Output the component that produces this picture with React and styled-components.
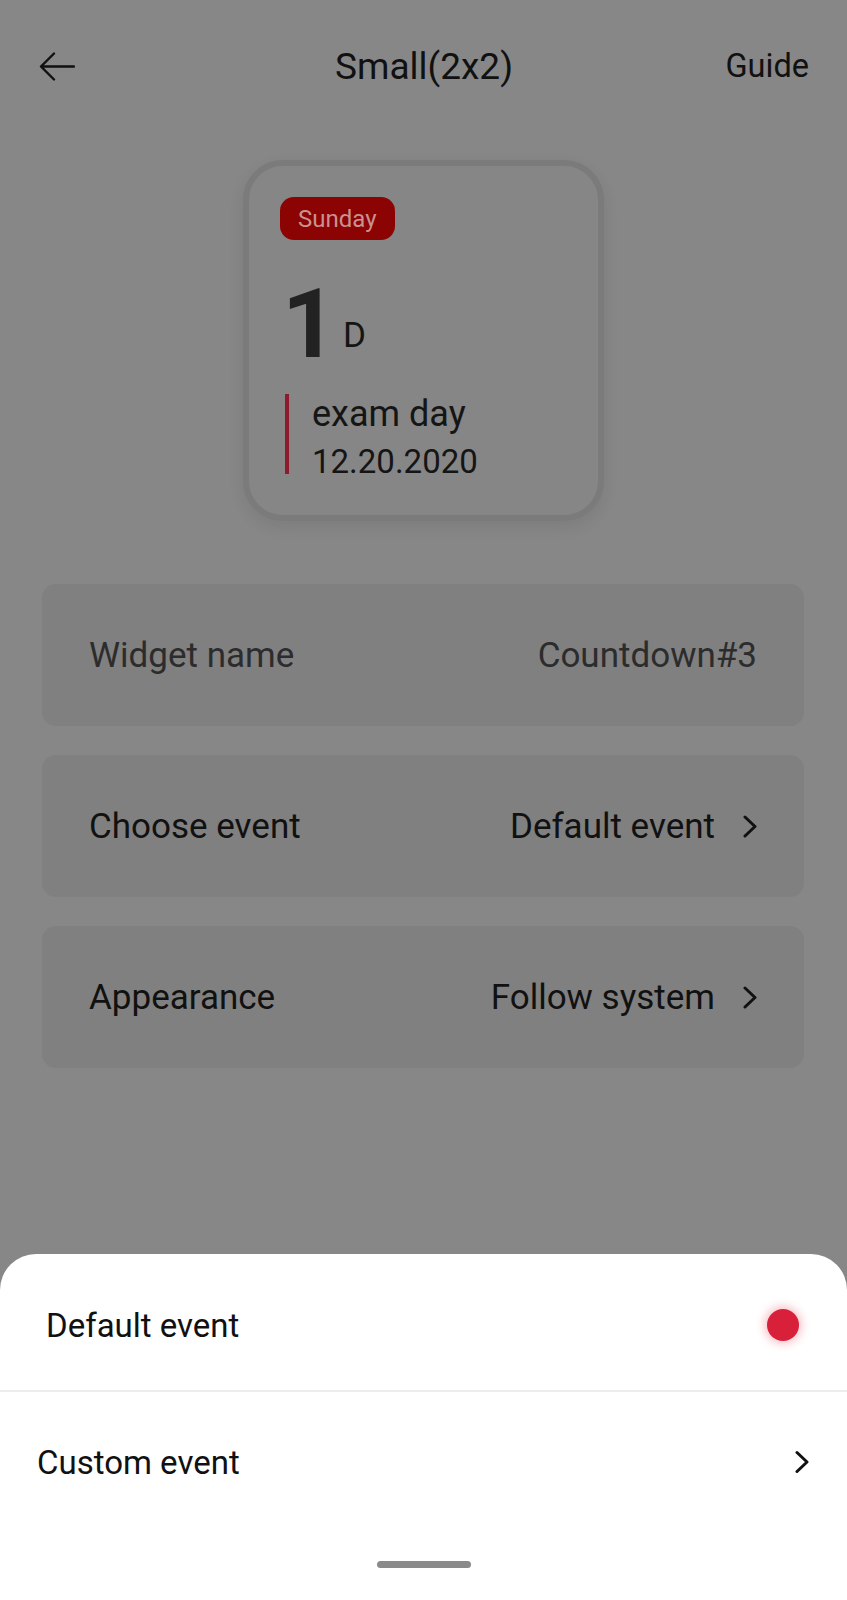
import React from "react";
import styled, { createGlobalStyle } from "styled-components";

const Global = createGlobalStyle`
  html, body { margin: 0; padding: 0; }
  body {
    background: #878787;
    font-family: Roboto, "Noto Sans", "Liberation Sans", sans-serif;
    color: #111;
  }
  * { box-sizing: border-box; }
`;

const Screen = styled.div`
  position: relative;
  width: 847px;
  height: 1600px;
  background: #878787;
  overflow: hidden;
`;

const Header = styled.header`
  display: grid;
  grid-template-columns: 1fr auto 1fr;
  align-items: center;
  height: 133px;
  padding: 0 38px 0 39px;
`;

const BackButton = styled.div`
  display: flex;
  align-items: center;
  justify-self: start;
`;

const Title = styled.h1`
  margin: 0;
  font-size: 37px;
  font-weight: 400;
  color: #111;
  line-height: 1;
`;

const Guide = styled.span`
  justify-self: end;
  font-size: 32.5px;
  color: #111;
  line-height: 1;
`;

const PreviewWrap = styled.div`
  display: flex;
  justify-content: center;
  margin-top: 27px;
`;

const WidgetCard = styled.div`
  width: 361px;
  height: 361px;
  border: 6px solid #7b7b7b;
  border-radius: 40px;
  background: #868686;
  padding: 31px;
  display: flex;
  flex-direction: column;
  align-items: flex-start;
  box-shadow: 0 6px 16px rgba(0, 0, 0, 0.08);
  & > * { flex-shrink: 0; }
`;

const DayPill = styled.span`
  display: inline-flex;
  align-items: center;
  justify-content: center;
  height: 43px;
  padding: 0 18px;
  border-radius: 14px;
  background: #8c0303;
  color: #c99191;
  font-size: 24px;
  line-height: 1;
`;

const CountLine = styled.div`
  margin-top: 36px;
  margin-left: 2px;
  height: 96px;
  line-height: 96px;
  white-space: nowrap;
`;

const BigNum = styled.span`
  font-size: 96px;
  font-weight: 700;
  color: #222;
`;

const Unit = styled.span`
  display: inline-block;
  margin-left: 6px;
  font-size: 35px;
  line-height: 1;
  color: #151515;
  vertical-align: 10px;
`;

const EventBlock = styled.div`
  display: flex;
  margin-top: 22px;
  margin-left: 5px;
`;

const Accent = styled.div`
  width: 4px;
  height: 80px;
  background: #8d1b2b;
  flex-shrink: 0;
`;

const EventText = styled.div`
  display: flex;
  flex-direction: column;
  margin-left: 23px;
  gap: 9px;
`;

const EventName = styled.span`
  font-size: 36px;
  line-height: 40px;
  color: #151515;
`;

const EventDate = styled.span`
  font-size: 33px;
  line-height: 38px;
  color: #151515;
`;

const SettingsList = styled.div`
  display: flex;
  flex-direction: column;
  gap: 29px;
  margin-top: 63px;
  padding: 0 43px 0 42px;
`;

const SettingRow = styled.div`
  display: flex;
  align-items: center;
  justify-content: space-between;
  height: 142px;
  padding: 0 47px 0 47px;
  background: #808080;
  border-radius: 14px;
  color: ${(p) => (p.$muted ? "#2c2c2c" : "#111")};
  font-size: 35px;
`;

const RowValue = styled.div`
  display: flex;
  align-items: center;
  gap: 28px;
`;

const Sheet = styled.div`
  position: absolute;
  left: 0;
  right: 0;
  bottom: 0;
  height: 346px;
  background: #fff;
  border-radius: 36px 36px 0 0;
  display: flex;
  flex-direction: column;
`;

const SheetItem = styled.div`
  display: flex;
  align-items: center;
  justify-content: space-between;
  height: ${(p) => p.$h}px;
  padding: ${(p) => p.$pt || 0}px ${(p) => p.$pr}px 0 ${(p) => p.$pl}px;
  font-size: 33px;
  color: #111;
`;

const Divider = styled.div`
  height: 2px;
  background: #ececec;
`;

const RadioDot = styled.span`
  width: 32px;
  height: 32px;
  border-radius: 50%;
  background: #d9203b;
  box-shadow: 0 0 8px 3px rgba(230, 60, 80, 0.3);
`;

const HomeBar = styled.div`
  align-self: center;
  width: 94px;
  height: 7px;
  margin-top: 29px;
  border-radius: 4px;
  background: #8a8a8a;
`;

const Chevron = ({ w = 14, h = 23, sw = 3 }) => (
  <svg width={w} height={h} viewBox="0 0 14 23" fill="none">
    <polyline
      points="2,2 12,11.5 2,21"
      stroke="#111"
      strokeWidth={sw}
      strokeLinecap="round"
      strokeLinejoin="round"
    />
  </svg>
);

const BackArrow = () => (
  <svg width="36" height="29" viewBox="0 0 36 29" fill="none">
    <path
      d="M35 14.5H2M15 1.5L2 14.5L15 27.5"
      stroke="#111"
      strokeWidth="2.4"
      strokeLinecap="round"
      strokeLinejoin="round"
    />
  </svg>
);

export default function App() {
  return (
    <>
      <Global />
      <Screen>
        <Header>
          <BackButton>
            <BackArrow />
          </BackButton>
          <Title>Small(2x2)</Title>
          <Guide>Guide</Guide>
        </Header>

        <PreviewWrap>
          <WidgetCard>
            <DayPill>Sunday</DayPill>
            <CountLine>
              <BigNum>1</BigNum>
              <Unit>D</Unit>
            </CountLine>
            <EventBlock>
              <Accent />
              <EventText>
                <EventName>exam day</EventName>
                <EventDate>12.20.2020</EventDate>
              </EventText>
            </EventBlock>
          </WidgetCard>
        </PreviewWrap>

        <SettingsList>
          <SettingRow $muted>
            <span>Widget name</span>
            <RowValue>Countdown#3</RowValue>
          </SettingRow>
          <SettingRow>
            <span>Choose event</span>
            <RowValue>
              Default event
              <Chevron />
            </RowValue>
          </SettingRow>
          <SettingRow>
            <span>Appearance</span>
            <RowValue>
              Follow system
              <Chevron />
            </RowValue>
          </SettingRow>
        </SettingsList>

        <Sheet>
          <SheetItem $h={136} $pt={6} $pl={46} $pr={48}>
            <span>Default event</span>
            <RadioDot />
          </SheetItem>
          <Divider />
          <SheetItem $h={140} $pl={37} $pr={38}>
            <span>Custom event</span>
            <Chevron w={14} h={24} />
          </SheetItem>
          <HomeBar />
        </Sheet>
      </Screen>
    </>
  );
}
